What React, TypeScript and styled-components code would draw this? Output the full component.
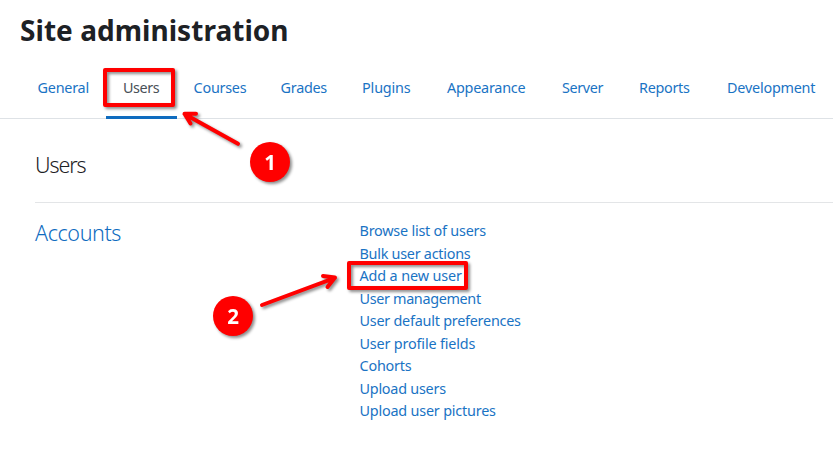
import React from "react";
import styled, { createGlobalStyle } from "styled-components";

const GlobalStyle = createGlobalStyle`
  * { box-sizing: border-box; }
  html, body { margin: 0; background: #fff; overflow: hidden; }
  body { font-family: "Noto Sans", "Open Sans", sans-serif; font-size: 14.4px; color: #1d2125; }
`;

const Page = styled.div`
  position: relative;
  width: 833px;
  height: 449px;
  overflow: hidden;
`;

const Title = styled.h1`
  margin: 0;
  padding: 10px 0 0 20px;
  height: 60px;
  font-size: 28px;
  line-height: 40px;
  font-weight: 700;
  letter-spacing: 0.04px;
`;

const Tabs = styled.nav`
  display: flex;
  height: 59px;
  padding-left: 21px;
  border-bottom: 1px solid #dee2e6;
`;

const Tab = styled.a<{ $width: number; $spacing: number; $active?: boolean }>`
  flex: 0 0 ${(p) => p.$width}px;
  height: 59px;
  padding: 17px 0 0 16.6px;
  line-height: 22px;
  letter-spacing: ${(p) => p.$spacing}px;
  white-space: nowrap;
  color: ${(p) => (p.$active ? "#495057" : "#1a73c4")};
  border-bottom: 3px solid ${(p) => (p.$active ? "#0f6cbf" : "transparent")};
`;

const Content = styled.main`
  padding-left: 35px;
`;

const Heading = styled.h2<{ $link?: boolean; $spacing: number }>`
  margin: 0;
  font-size: 21.5px;
  line-height: 28px;
  font-weight: 300;
  letter-spacing: ${(p) => p.$spacing}px;
  color: ${(p) => (p.$link ? "#0f6cbf" : "#1d2125")};
`;

const SectionHeader = styled.header`
  height: 84px;
  padding-top: 32px;
  border-bottom: 1px solid #e3e5e7;
`;

const Section = styled.section`
  display: grid;
  grid-template-columns: 324.5px 1fr;
  padding-top: 16px;
`;

const LinkList = styled.ul`
  list-style: none;
  margin: 0;
  padding: 1px 0 0;
`;

const LinkItem = styled.li<{ $spacing: number }>`
  height: 22.5px;
  line-height: 22.5px;
  letter-spacing: ${(p) => p.$spacing}px;
  white-space: nowrap;
  color: #1a73c4;
`;

const Annotations = styled.svg`
  position: absolute;
  inset: 0;
  pointer-events: none;
  filter: drop-shadow(2px 2px 1.5px rgba(0, 0, 0, 0.45));
`;

const StepLabel = styled.text`
  font: 700 20.5px "Noto Sans", "Open Sans", sans-serif;
  fill: #fff;
  text-anchor: middle;
`;

const tabs = [
  { label: "General", width: 85.3, spacing: -0.25 },
  { label: "Users", width: 70.7, spacing: -0.4, active: true },
  { label: "Courses", width: 87, spacing: -0.25 },
  { label: "Grades", width: 81.5, spacing: -0.28 },
  { label: "Plugins", width: 85, spacing: -0.18 },
  { label: "Appearance", width: 115, spacing: -0.25 },
  { label: "Server", width: 77, spacing: -0.4 },
  { label: "Reports", width: 88, spacing: -0.32 },
  { label: "Development", width: 123, spacing: -0.23 },
];

const links = [
  { label: "Browse list of users", spacing: -0.22 },
  { label: "Bulk user actions", spacing: -0.26 },
  { label: "Add a new user", spacing: -0.13 },
  { label: "User management", spacing: -0.34 },
  { label: "User default preferences", spacing: -0.24 },
  { label: "User profile fields", spacing: -0.17 },
  { label: "Cohorts", spacing: -0.2 },
  { label: "Upload users", spacing: -0.24 },
  { label: "Upload user pictures", spacing: -0.2 },
];

export default function App() {
  return (
    <Page>
      <GlobalStyle />
      <Title>Site administration</Title>
      <Tabs>
        {tabs.map((t) => (
          <Tab key={t.label} $width={t.width} $spacing={t.spacing} $active={t.active}>
            {t.label}
          </Tab>
        ))}
      </Tabs>
      <Content>
        <SectionHeader>
          <Heading $spacing={-1.1}>Users</Heading>
        </SectionHeader>
        <Section>
          <Heading $link $spacing={-0.4}>Accounts</Heading>
          <LinkList>
            {links.map((l) => (
              <LinkItem key={l.label} $spacing={l.spacing}>{l.label}</LinkItem>
            ))}
          </LinkList>
        </Section>
      </Content>
      <Annotations width="833" height="449" viewBox="0 0 833 449">
        <g fill="none" stroke="#f00" strokeWidth="4" strokeLinecap="round" strokeLinejoin="round">
          <rect x="105" y="70" width="68" height="35" />
          <rect x="349" y="263" width="117" height="25" />
          <path d="M238 143.8 184.5 114M196 113.7 184.5 113.7 190.5 123.5" />
          <path d="M262 305 335 277.8M323 276 335 277.5 327.5 287" />
        </g>
        <circle cx="270" cy="162" r="20" fill="#f00" />
        <circle cx="233" cy="316" r="20" fill="#f00" />
        <StepLabel x="270" y="169.5">1</StepLabel>
        <StepLabel x="233" y="323.5">2</StepLabel>
      </Annotations>
    </Page>
  );
}
